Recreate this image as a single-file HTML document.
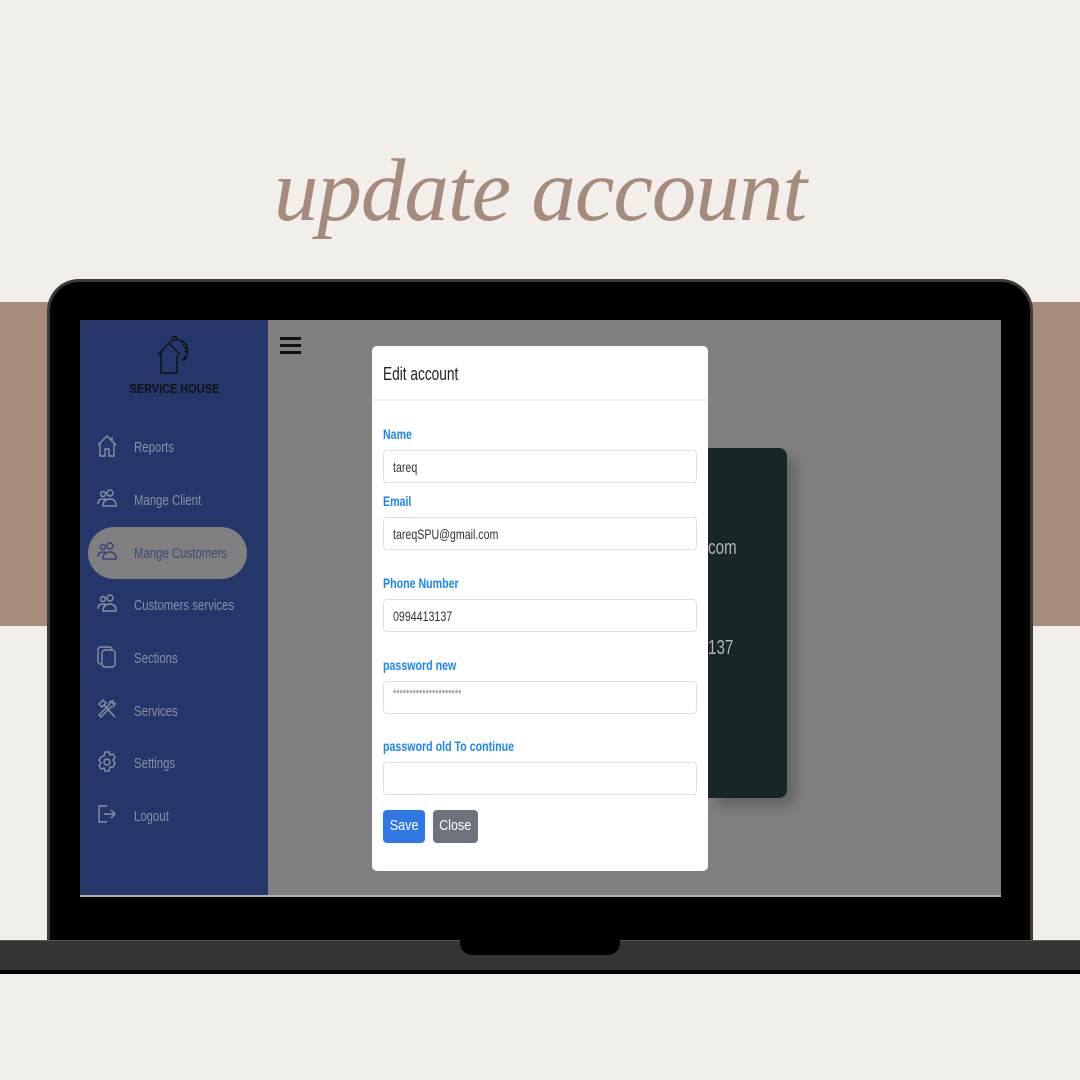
<!DOCTYPE html>
<html><head><meta charset="utf-8"><style>
*{margin:0;padding:0;box-sizing:border-box}
body{width:1080px;height:1080px;background:#f2efea;position:relative;overflow:hidden;font-family:"Liberation Sans",sans-serif}
.abs{position:absolute}
.n{display:inline-block;transform:scaleX(.76);transform-origin:left center;white-space:nowrap}
.title{left:0;width:1080px;top:140px;text-align:center;font-family:"Liberation Serif",serif;font-style:italic;font-size:89px;color:#a48b7b;letter-spacing:-1px}
.band{left:0;top:302px;width:1080px;height:324px;background:#a48b7c}
.laptop{left:47px;top:279px;width:986px;height:680px;background:#000;border:3px solid #3a3a3a;border-bottom:none;border-radius:32px 32px 0 0}
.base{left:0;top:940px;width:1080px;height:30px;background:#353535;border-top:1px solid #555}
.base2{left:0;top:970px;width:1080px;height:4px;background:#000}
.notch{left:460px;top:940px;width:160px;height:15px;background:#000;border-radius:0 0 12px 12px}
.screen{left:80px;top:320px;width:921px;height:577px;background:#808080;border-bottom:2px solid #b0b0b0;overflow:hidden}
.side{left:0;top:0;width:188px;height:577px;background:#25376a}
.item{position:absolute;left:0;width:188px;height:52px;color:#8a8fa3;font-size:15px}
.item svg{position:absolute;left:17px;top:14px}
.item span.n{position:absolute;left:54px;top:18px}
.pill{left:8px;top:207px;width:159px;height:52px;background:#7f7f7f;border-radius:26px}
.card{left:628px;top:128px;width:79px;height:350px;background:#172627;border-radius:0 8px 8px 0;box-shadow:8px 8px 14px rgba(0,0,0,.25);color:#b4b4b4;font-size:20px}
.modal{left:292px;top:26px;width:336px;height:525px;background:#fff;border-radius:5px}
.mh{height:55px;border-bottom:2px solid #eceef0;padding:18px 0 0 11px;font-size:18px;color:#222}
.lbl{position:absolute;left:11px;color:#1a86f5;font-weight:bold;font-size:14px}
.inp{position:absolute;left:11px;width:314px;height:33px;border:1px solid #dde0e3;border-radius:4px;font-size:14px;color:#333;padding:8px 0 0 9px}
.btn{position:absolute;top:464px;height:33px;border-radius:4px;color:#fff;font-size:15px;padding-top:7px;text-align:center}
.btn .n{transform-origin:center;transform:scaleX(.84)}
</style></head><body>
<div class="abs title">update account</div>
<div class="abs band"></div>
<div class="abs laptop"></div>
<div class="abs base"></div>
<div class="abs base2"></div>
<div class="abs notch"></div>
<div class="abs screen">
 <div class="abs side">
  <svg class="abs" style="left:76px;top:16px" width="34" height="42" viewBox="0 0 34 42" fill="none" stroke="#111" stroke-width="1.4">
   <path d="M2 19 L13 7 L24 19 M5 16 V37 H21 V19"/>
   <path d="M14 6 A11 11 0 0 1 27 24"/>
   <path d="M16 3 l1-2.5 h3 l1 2.5 M24 6 l2.5-1 2 2 -1 2.5 M28 12 l3 0 0 3 -3 1 M28 20 l2 2 -2 2 -2.5-1"/>
  </svg>
  <div class="abs" style="left:0;width:188px;top:61px;text-align:center;font-weight:bold;font-size:13px;color:#111"><span class="n" style="transform-origin:center;transform:scaleX(.84)">SERVICE HOUSE</span></div>
  <div class="abs pill"></div>
  <div class="item" style="top:101px"><svg width="20" height="22" viewBox="0 0 20 22" fill="none" stroke="#8a8fa3" stroke-width="1.4"><path d="M1 10 L10 1 L19 10 M3 8 V21 H8 V14 H12 V21 H17 V8 M15 2 V5"/></svg><span class="n">Reports</span></div>
  <div class="item" style="top:154px"><svg width="20" height="20" viewBox="0 0 20 20" fill="none" stroke="#8a8fa3" stroke-width="1.4"><circle cx="6" cy="6" r="2.5"/><circle cx="13" cy="5" r="3"/><path d="M1 16 Q1 11 6 11 Q9 11 9 13 M6 18 Q6 11 13 11 Q19 11 19 18 Z"/></svg><span class="n">Mange Client</span></div>
  <div class="item" style="top:207px;color:#3d4a78"><svg width="20" height="20" viewBox="0 0 20 20" fill="none" stroke="#33437a" stroke-width="1.4"><circle cx="6" cy="6" r="2.5"/><circle cx="13" cy="5" r="3"/><path d="M1 16 Q1 11 6 11 Q9 11 9 13 M6 18 Q6 11 13 11 Q19 11 19 18 Z"/></svg><span class="n">Mange Customers</span></div>
  <div class="item" style="top:259px"><svg width="20" height="20" viewBox="0 0 20 20" fill="none" stroke="#8a8fa3" stroke-width="1.4"><circle cx="6" cy="6" r="2.5"/><circle cx="13" cy="5" r="3"/><path d="M1 16 Q1 11 6 11 Q9 11 9 13 M6 18 Q6 11 13 11 Q19 11 19 18 Z"/></svg><span class="n">Customers services</span></div>
  <div class="item" style="top:312px"><svg width="20" height="22" viewBox="0 0 20 22" fill="none" stroke="#8a8fa3" stroke-width="1.4"><rect x="5" y="4" width="13" height="17" rx="3"/><path d="M4 18 Q1 18 1 15 V4 Q1 1 4 1 H12 Q14 1 15 3"/></svg><span class="n">Sections</span></div>
  <div class="item" style="top:365px"><svg width="20" height="20" viewBox="0 0 20 20" fill="none" stroke="#8a8fa3" stroke-width="1.4"><path d="M2 5 L6 1 L9 4 L5 8 Z M7 6 L18 18 M16 2 Q12 2 12 6 L2 16 L4 18 L14 8 Q18 8 18 4 L16 5 L15 4 Z"/></svg><span class="n">Services</span></div>
  <div class="item" style="top:417px"><svg width="20" height="22" viewBox="0 0 20 22" fill="none" stroke="#8a8fa3" stroke-width="1.4"><circle cx="10" cy="11" r="3"/><path d="M8 1 H12 L13 4 L16 3 L18 6 L16 9 L18 12 L16 16 L13 16 L12 20 H8 L7 17 L4 18 L2 15 L4 12 L2 9 L4 6 L7 5 Z"/></svg><span class="n">Settings</span></div>
  <div class="item" style="top:470px"><svg width="20" height="20" viewBox="0 0 20 20" fill="none" stroke="#8a8fa3" stroke-width="1.4"><path d="M10 2 H2 V18 H10 M7 10 H18 M14 6 L18 10 L14 14"/></svg><span class="n">Logout</span></div>
 </div>
 <div class="abs" style="left:200px;top:17px;width:21px;height:17px;border-top:3px solid #111;border-bottom:3px solid #111"><div style="margin-top:4px;border-top:3px solid #111"></div></div>
 <div class="abs card"><div class="abs" style="left:0;top:89px"><span class="n">com</span></div><div class="abs" style="left:0;top:189px"><span class="n">137</span></div></div>
 <div class="abs modal">
  <div class="mh"><span class="n">Edit account</span></div>
  <div class="lbl" style="top:80px"><span class="n">Name</span></div>
  <div class="inp" style="top:104px"><span class="n">tareq</span></div>
  <div class="lbl" style="top:147px"><span class="n">Email</span></div>
  <div class="inp" style="top:171px"><span class="n">tareqSPU@gmail.com</span></div>
  <div class="lbl" style="top:229px"><span class="n">Phone Number</span></div>
  <div class="inp" style="top:253px"><span class="n">0994413137</span></div>
  <div class="lbl" style="top:311px"><span class="n">password new</span></div>
  <div class="inp" style="top:335px;font-size:11px;color:#777;padding-top:6px"><span class="n">*********************</span></div>
  <div class="lbl" style="top:392px"><span class="n">password old To continue</span></div>
  <div class="inp" style="top:416px"></div>
  <div class="btn" style="left:11px;width:42px;background:#2f77e3"><span class="n">Save</span></div>
  <div class="btn" style="left:61px;width:45px;background:#6c737c"><span class="n">Close</span></div>
 </div>
</div>
</body></html>
